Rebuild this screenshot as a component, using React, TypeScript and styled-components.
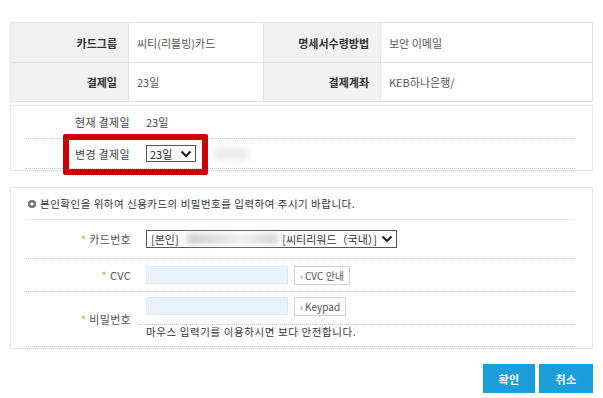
import React from "react";
import styled, { createGlobalStyle } from "styled-components";

const GlobalStyle = createGlobalStyle`
  html, body {
    margin: 0;
    padding: 0;
    background: #fff;
  }
  body {
    font-family: "Noto Sans CJK KR", "Noto Sans", sans-serif;
    font-size: 11px;
    color: #555;
  }
  * {
    box-sizing: border-box;
  }
`;

const Chevron = () => (
  <svg width="12" height="8" viewBox="0 0 12 8">
    <path d="M1.5 1.5 L6 6 L10.5 1.5" fill="none" stroke="#222" strokeWidth="2.2" />
  </svg>
);

export default function App() {
  return (
    <>
      <GlobalStyle />
      <Page>
        <InfoTable>
          <Th>카드그룹</Th>
          <Td>씨티(리볼빙)카드</Td>
          <Th>명세서수령방법</Th>
          <Td>보안 이메일</Td>
          <Th>결제일</Th>
          <Td>23일</Td>
          <Th>결제계좌</Th>
          <Td>KEB하나은행/</Td>
        </InfoTable>

        <ChangeBox>
          <ChangeRow $height={32}>
            <ChangeLabel>현재 결제일</ChangeLabel>
            <Value>23일</Value>
          </ChangeRow>
          <ChangeRow $height={29}>
            <ChangeLabel>변경 결제일</ChangeLabel>
            <Value>
              <DaySelect>
                <span>23일</span>
                <Chevron />
              </DaySelect>
              <Smudge />
            </Value>
          </ChangeRow>
          <Highlight />
        </ChangeBox>

        <AuthBox>
          <AuthHeader>
            <Bullet />
            본인확인을 위하여 신용카드의 비밀번호를 입력하여 주시기 바랍니다.
          </AuthHeader>
          <FormRow $height={38}>
            <FormLabel>
              <Star>*</Star>카드번호
            </FormLabel>
            <FormValue>
              <CardSelect>
                <span>[본인]</span>
                <Masked />
                <span>[씨티리워드（국내）]</span>
                <Chevron />
              </CardSelect>
            </FormValue>
          </FormRow>
          <FormRow $height={32}>
            <FormLabel>
              <Star>*</Star>CVC
            </FormLabel>
            <FormValue>
              <InputLine>
                <TextInput />
                <SmallButton>
                  <Arrow>›</Arrow>CVC 안내
                </SmallButton>
              </InputLine>
            </FormValue>
          </FormRow>
          <FormRow $height={54}>
            <FormLabel>
              <Star>*</Star>비밀번호
            </FormLabel>
            <PasswordValue>
              <PasswordTop>
                <TextInput />
                <SmallButton>
                  <Arrow>›</Arrow>Keypad
                </SmallButton>
              </PasswordTop>
              <Notice>마우스 입력기를 이용하시면 보다 안전합니다.</Notice>
            </PasswordValue>
          </FormRow>
        </AuthBox>

        <Actions>
          <ActionButton $width={52}>확인</ActionButton>
          <ActionButton $width={54}>취소</ActionButton>
        </Actions>
      </Page>
    </>
  );
}

const Page = styled.div`
  width: 603px;
  padding: 22px 10px 0;
`;

const InfoTable = styled.div`
  display: grid;
  grid-template-columns: 117px 134px 116px 1fr;
  grid-template-rows: 39px 38px;
  gap: 1px;
  background: #e2e2e2;
  border: 1px solid #e2e2e2;
`;

const Th = styled.div`
  display: flex;
  align-items: center;
  justify-content: flex-end;
  padding-right: 11px;
  background: #f1f1f1;
  font-weight: bold;
  color: #333;
`;

const Td = styled.div`
  display: flex;
  align-items: center;
  padding-left: 8px;
  background: #fff;
  color: #555;
`;

const ChangeBox = styled.div`
  position: relative;
  margin-top: 3px;
  border: 1px solid #e5e5e5;
  padding: 0 17px 1px 14px;
`;

const ChangeRow = styled.div<{ $height: number }>`
  display: grid;
  grid-template-columns: 121px 1fr;
  align-items: center;
  height: ${(p) => p.$height + 1}px;
  border-bottom: 1px dotted #c4c4c4;
`;

const ChangeLabel = styled.div`
  padding-left: 50px;
  color: #444;
  letter-spacing: 0.3px;
`;

const Value = styled.div`
  display: flex;
  align-items: center;
  color: #444;
`;

const DaySelect = styled.div`
  display: flex;
  align-items: center;
  justify-content: space-between;
  width: 50px;
  height: 17px;
  padding: 0 3px;
  border: 1px solid #555;
  color: #222;
`;

const Smudge = styled.div`
  width: 34px;
  height: 12px;
  margin-left: 18px;
  background: #e8e8e8;
  filter: blur(4px);
`;

const Highlight = styled.div`
  position: absolute;
  left: 52px;
  top: 28px;
  width: 145px;
  height: 41px;
  border: 6px solid #cc0000;
  border-radius: 2px;
`;

const AuthBox = styled.div`
  margin-top: 16px;
  border: 1px solid #e5e5e5;
  padding: 0 17px 1px 14px;
`;

const AuthHeader = styled.div`
  display: flex;
  align-items: center;
  gap: 4px;
  height: 32px;
  padding-left: 3px;
  border-bottom: 1px solid #e6e6e6;
  color: #333;
  font-size: 10.5px;
  letter-spacing: 0.5px;
`;

const Bullet = styled.span`
  width: 8px;
  height: 8px;
  border-radius: 50%;
  background: radial-gradient(circle, #fff 0 1.4px, #6f6f6f 1.8px);
`;

const FormRow = styled.div<{ $height: number }>`
  display: grid;
  grid-template-columns: 113px 1fr;
  align-items: center;
  height: ${(p) => p.$height + 1}px;
  border-bottom: 1px dotted #c4c4c4;
`;

const FormLabel = styled.div`
  text-align: right;
  padding-right: 7px;
  color: #555;
  letter-spacing: 0.3px;
`;

const Star = styled.span`
  margin-right: 3px;
  color: #e0963c;
`;

const FormValue = styled.div`
  padding-left: 8px;
`;

const CardSelect = styled.div`
  display: flex;
  align-items: center;
  width: 251px;
  height: 18px;
  padding: 0 3px 0 4px;
  border: 1px solid #555;
  color: #333;
  font-size: 11px;
  span {
    white-space: nowrap;
  }
  svg {
    margin-left: 4px;
  }
`;

const Masked = styled.div`
  flex: 1;
  height: 10px;
  margin: 0 4px 0 8px;
  background: linear-gradient(90deg, #c8c8c8, #e0e0e0 40%, #eeeeee 60%, #cfcfcf);
  filter: blur(3px);
`;

const InputLine = styled.div`
  display: flex;
  align-items: center;
  gap: 6px;
`;

const TextInput = styled.div`
  width: 142px;
  height: 18px;
  background: #e9f2fb;
  border: 1px solid #dce7f2;
`;

const SmallButton = styled.div`
  display: flex;
  align-items: center;
  height: 19px;
  padding: 0 5px;
  border: 1px solid #d0d0d0;
  background: #fff;
  color: #555;
  font-size: 10px;
  white-space: nowrap;
`;

const Arrow = styled.span`
  margin-right: 2px;
  color: #777;
`;

const PasswordValue = styled.div`
  display: flex;
  flex-direction: column;
  height: 100%;
`;

const PasswordTop = styled(InputLine)`
  height: 33px;
  padding: 0 0 0 8px;
  align-items: flex-start;
  padding-top: 5px;
  border-bottom: 1px dotted #c4c4c4;
`;

const Notice = styled.div`
  padding: 0 0 0 8px;
  line-height: 14px;
  font-size: 10.5px;
  letter-spacing: 0.6px;
  color: #333;
`;

const Actions = styled.div`
  display: flex;
  justify-content: flex-end;
  gap: 4px;
  margin-top: 15px;
`;

const ActionButton = styled.div<{ $width: number }>`
  display: flex;
  align-items: center;
  justify-content: center;
  width: ${(p) => p.$width}px;
  height: 29px;
  background: #1c9ed8;
  color: #fff;
  font-weight: bold;
  font-size: 11px;
  letter-spacing: 0.5px;
`;
